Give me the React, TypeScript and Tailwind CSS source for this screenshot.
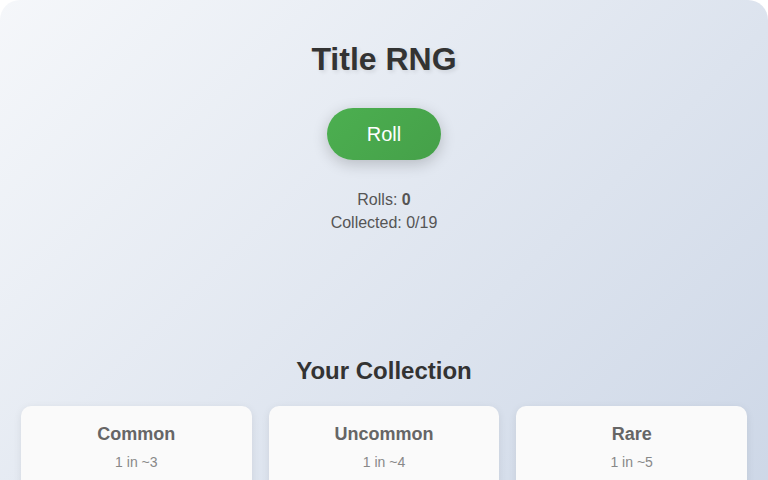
import React from "react";

const tiers = [
  { name: "Common", odds: "1 in ~3" },
  { name: "Uncommon", odds: "1 in ~4" },
  { name: "Rare", odds: "1 in ~5" },
];

export default function App() {
  return (
    <div className="w-[768px] h-[480px] overflow-hidden bg-white" style={{ fontFamily: '"Liberation Sans", Arial, sans-serif' }}>
      <div className="w-full min-h-[820px] rounded-[20px] bg-[linear-gradient(135deg,#f5f7fa_0%,#c3cfe2_100%)] px-[21px] pt-[39px] flex flex-col items-center">
        <h1 className="text-[32px] leading-[40px] font-bold text-[#333] [text-shadow:2px_2px_4px_rgba(0,0,0,0.1)]">Title RNG</h1>
        <button className="mt-[29px] w-[114px] h-[52px] rounded-full bg-[linear-gradient(135deg,#4caf50,#45a049)] text-white text-[20px] shadow-[0_4px_15px_rgba(0,0,0,0.2)]">
          Roll
        </button>
        <div className="mt-[28px] text-[16px] leading-[23px] text-[#555] text-center">
          <div>Rolls: <span className="font-bold">0</span></div>
          <div>Collected: 0/19</div>
        </div>
        <h2 className="mt-[122px] text-[24px] leading-[30px] font-bold text-[#333]">Your Collection</h2>
        <div className="mt-[20px] w-full grid grid-cols-3 gap-[17px]">
          {tiers.map((t) => (
            <div key={t.name} className="bg-[#fafafa] rounded-[10px] shadow-[0_2px_8px_rgba(0,0,0,0.08)] pt-[16px] pb-[20px] text-center h-[120px]">
              <div className="text-[18px] leading-[24px] font-bold text-[#666]">{t.name}</div>
              <div className="mt-[7px] text-[14px] leading-[18px] text-[#888]">{t.odds}</div>
            </div>
          ))}
        </div>
      </div>
    </div>
  );
}
